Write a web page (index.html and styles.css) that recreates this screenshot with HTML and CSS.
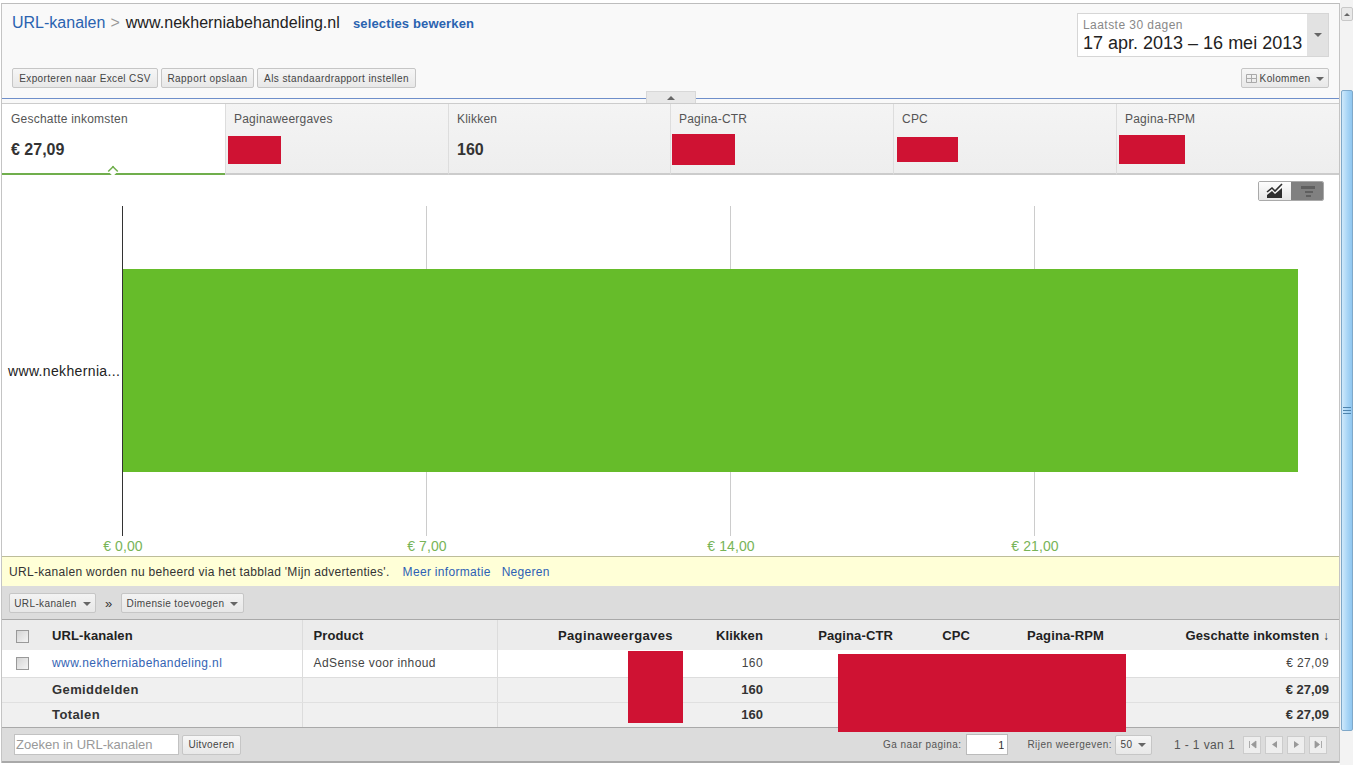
FILE: index.html
```html
<!DOCTYPE html>
<html lang="nl">
<head>
<meta charset="utf-8">
<title>URL-kanalen</title>
<link rel="stylesheet" href="styles.css">
</head>
<body>
<div class="page">
  <main class="main">
    <header class="header">
      <div class="top-row">
        <div class="crumbs">
          <a class="crumb-link">URL-kanalen</a><span class="crumb-sep">&gt;</span><span class="crumb-cur">www.nekherniabehandeling.nl</span><a class="edit-link">selecties bewerken</a>
        </div>
        <div class="date-box">
          <div class="date-text"><div class="date-label">Laatste 30 dagen</div><div class="date-range">17 apr. 2013 – 16 mei 2013</div></div>
          <div class="date-arrow"><span class="caret"></span></div>
        </div>
      </div>
      <div class="btn-row">
        <div class="btn-group">
          <button class="btn btn-export">Exporteren naar Excel CSV</button>
          <button class="btn btn-save">Rapport opslaan</button>
          <button class="btn btn-default">Als standaardrapport instellen</button>
        </div>
        <button class="btn btn-cols">
          <svg class="cols-icon" width="11" height="9" viewBox="0 0 11 9"><path d="M.5.5h10v8H.5zM.5 4.5h10M5.500.5v8" fill="none" stroke="#aaa"/></svg>Kolommen<span class="caret caret-btn"></span>
        </button>
      </div>
      <div class="collapse"><span class="caret-up"></span></div>
    </header>

    <div class="tabs-gap"></div>
    <section class="tabs">
      <div class="tab tab-on"><div class="tab-label">Geschatte inkomsten</div><div class="tab-value">€ 27,09</div><span class="notch"></span></div>
      <div class="tab"><div class="tab-label">Paginaweergaves</div></div>
      <div class="tab"><div class="tab-label">Klikken</div><div class="tab-value">160</div></div>
      <div class="tab"><div class="tab-label">Pagina-CTR</div></div>
      <div class="tab"><div class="tab-label">CPC</div></div>
      <div class="tab"><div class="tab-label">Pagina-RPM</div></div>
    </section>

    <section class="chart">
      <div class="chart-tools">
        <div class="toggle">
          <span class="toggle-line"><svg width="20" height="16" viewBox="0 0 20 16"><path d="M2 15v-3l5-4 3 3 7-6v10z" fill="#2e2e2e"/><path d="M2 9l5-4 3 3 7-7" fill="none" stroke="#2e2e2e" stroke-width="1.600"/></svg></span>
          <span class="toggle-bar"><svg width="22" height="14" viewBox="0 0 22 14"><path d="M5 2h14v3H5zM9 7h8v2H9zM10 11h5v2h-5z" fill="#5f5f5f"/></svg></span>
        </div>
      </div>
      <svg class="plot" width="1337" height="350" viewBox="0 0 1337 350">
        <path d="M424.500 0V330M728.500 0V330M1032.500 0V330" stroke="#ccc" fill="none"/>
        <rect x="121" y="63" width="1175" height="203" fill="#66bc2a"/>
        <path d="M120.500 0V330" stroke="#333" fill="none"/>
        <text class="cat" x="6" y="170">www.nekhernia...</text>
        <text class="tick" x="121" y="345">€ 0,00</text>
        <text class="tick" x="425" y="345">€ 7,00</text>
        <text class="tick" x="729" y="345">€ 14,00</text>
        <text class="tick" x="1033" y="345">€ 21,00</text>
      </svg>
    </section>

    <div class="notice">URL-kanalen worden nu beheerd via het tabblad 'Mijn advertenties'.<a class="notice-link">Meer informatie</a><a class="notice-link notice-link2">Negeren</a></div>

    <div class="dim-bar">
      <button class="btn btn-dim btn-dim1">URL-kanalen<span class="caret caret-btn"></span></button>
      <span class="raquo">»</span>
      <button class="btn btn-dim btn-dim2">Dimensie toevoegen<span class="caret caret-btn"></span></button>
    </div>

    <table class="grid">
      <colgroup>
        <col class="c-check"><col class="c-url"><col class="c-prod"><col class="c-views"><col class="c-clicks"><col class="c-ctr"><col class="c-cpc"><col class="c-rpm"><col class="c-earn">
      </colgroup>
      <thead>
        <tr>
          <th class="ck"><span class="box"></span></th><th class="l sep">URL-kanalen</th><th class="l sep prod">Product</th>
          <th class="th-wide">Paginaweergaves</th><th>Klikken</th><th>Pagina-CTR</th><th>CPC</th><th>Pagina-RPM</th><th>Geschatte inkomsten <span class="sort">↓</span></th>
        </tr>
      </thead>
      <tbody>
        <tr class="row-data">
          <td class="ck"><span class="box"></span></td><td class="l sep"><a class="site-link">www.nekherniabehandeling.nl</a></td><td class="l sep prod">AdSense voor inhoud</td>
          <td></td><td>160</td><td></td><td></td><td></td><td>€ 27,09</td>
        </tr>
        <tr class="row-sum row-avg">
          <td class="ck"></td><td class="l sep">Gemiddelden</td><td class="l sep"></td>
          <td></td><td>160</td><td></td><td></td><td></td><td>€ 27,09</td>
        </tr>
        <tr class="row-sum row-tot">
          <td class="ck"></td><td class="l sep">Totalen</td><td class="l sep"></td>
          <td></td><td>160</td><td></td><td></td><td></td><td>€ 27,09</td>
        </tr>
      </tbody>
    </table>

    <footer class="foot">
      <div class="foot-left">
        <input class="search" type="text" placeholder="Zoeken in URL-kanalen">
        <button class="btn btn-go">Uitvoeren</button>
      </div>
      <div class="foot-right">
        <span class="foot-label">Ga naar pagina:</span>
        <input class="page-input" type="text" value="1">
        <span class="foot-label foot-rows">Rijen weergeven:</span>
        <button class="btn btn-rows">50<span class="caret caret-btn"></span></button>
        <span class="range">1 - 1 van 1</span>
        <div class="pager">
          <span class="pg"><svg width="9" height="9" viewBox="0 0 9 9"><path d="M1.500 1v7M8 1v7L3.500 4.500z" fill="#999" stroke="#999" stroke-width=".8"/></svg></span>
          <span class="pg"><svg width="9" height="9" viewBox="0 0 9 9"><path d="M7 1v7L2 4.500z" fill="#999"/></svg></span>
          <span class="pg"><svg width="9" height="9" viewBox="0 0 9 9"><path d="M2 1v7l5-3.500z" fill="#999"/></svg></span>
          <span class="pg"><svg width="9" height="9" viewBox="0 0 9 9"><path d="M7.500 1v7M1 1v7l4.500-3.500z" fill="#999" stroke="#999" stroke-width=".8"/></svg></span>
        </div>
      </div>
    </footer>
  </main>

  <aside class="scrollbar">
    <div class="sb-up"><span class="caret-up caret-sb"></span></div>
    <div class="sb-thumb"><span class="sb-grip"></span></div>
  </aside>
</div>

<div class="redact r-views"></div>
<div class="redact r-ctr"></div>
<div class="redact r-cpc"></div>
<div class="redact r-rpm"></div>
<div class="redact r-col"></div>
<div class="redact r-cols"></div>
</body>
</html>
```

FILE: styles.css
```css
* { box-sizing: border-box; }
html, body { margin: 0; padding: 0; height: 765px; overflow: hidden; background: #fff; }
body { font-family: "Liberation Sans", Arial, sans-serif; color: #333; position: relative; }
a { text-decoration: none; }

.page { display: flex; width: 1353px; height: 765px; align-items: flex-start; }

.main { width: 1339px; margin: 3px 0 0 1px; border-top: 1px solid #bdbdbd; border-left: 1px solid #c4c4c4; border-right: 1px solid #c4c4c4; flex: none; }

/* header */
.header { position: relative; height: 95px; padding: 9px 10px 0 10px; background: #f9f9f9; border-bottom: 1px solid #6f8fca; }
.top-row { display: flex; justify-content: space-between; height: 43px; }
.crumbs { display: flex; align-items: baseline; font-size: 16px; padding-top: 1px; }
.crumb-link { color: #2a63b0; }
.crumb-sep { color: #999; margin: 0 6px 0 5px; }
.crumb-cur { color: #222; letter-spacing: .06px; }
.edit-link { color: #2a63b0; font-size: 13px; font-weight: bold; margin-left: 13px; letter-spacing: .15px; }
.date-box { display: flex; width: 252px; height: 44px; border: 1px solid #d6d6d6; background: #fff; }
.date-text { width: 229px; padding: 4px 0 0 5px; }
.date-label { font-size: 12px; color: #888; line-height: 14px; letter-spacing: .45px; }
.date-range { font-size: 18px; color: #222; line-height: 22px; white-space: nowrap; }
.date-arrow { flex: 1; background: #e2e2e2; display: flex; align-items: center; justify-content: center; }

.caret { display: inline-block; width: 0; height: 0; border-left: 4px solid transparent; border-right: 4px solid transparent; border-top: 4px solid #666; }
.caret-btn { margin-left: 6px; vertical-align: 1px; }
.caret-up { display: inline-block; width: 0; height: 0; border-left: 4px solid transparent; border-right: 4px solid transparent; border-bottom: 4px solid #666; }

.btn-row { display: flex; justify-content: space-between; margin-top: 12px; }
.btn-group { display: flex; gap: 3px; }
.btn { font-family: "Liberation Sans", Arial, sans-serif; font-size: 10px; letter-spacing: .37px; color: #444; height: 20px; padding: 0; border: 1px solid #c6c6c6; border-radius: 2px; background: linear-gradient(#f6f6f6, #e8e8e8); white-space: nowrap; }
.btn-export { width: 146px; }
.btn-save { width: 93px; letter-spacing: .45px; }
.btn-default { width: 159px; letter-spacing: .42px; }
.btn-cols { width: 88px; }
.cols-icon { margin-right: 3px; vertical-align: -1px; }
.collapse { position: absolute; left: 644px; top: 87px; width: 50px; height: 12px; background: #e8e8e8; border: 1px solid #d8d8d8; border-bottom: 0; display: flex; align-items: center; justify-content: center; }

/* metric tabs */
.tabs-gap { height: 4px; background: #f9f9f9; }
.tabs { display: grid; grid-template-columns: 223px 223px 222px 223px 223px 223px; height: 72px; border-top: 1px solid #ccc; }
.tab { position: relative; padding: 8px 9px 0 8px; background: linear-gradient(#f4f4f4, #eeeeee); border-left: 1px solid #ddd; border-bottom: 2px solid #ccc; }
.tab-label { font-size: 12px; line-height: 14px; color: #555; letter-spacing: .22px; }
.tab-value { font-size: 16px; font-weight: bold; line-height: 20px; margin-top: 14px; color: #333; }
.tab-on { background: #fff; border-left: 0; border-bottom: 2px solid #70ae4c; padding-left: 9px; }
.notch { position: absolute; left: 106px; bottom: -1px; width: 10px; height: 10px; background: #fff; border-top: 2px solid #70ae4c; border-left: 2px solid #70ae4c; transform: translateY(2px) rotate(45deg) scale(.75); }

/* chart */
.chart { background: #fff; }
.chart-tools { height: 31px; padding: 6px 15px 0 0; display: flex; justify-content: flex-end; }
.toggle { display: flex; width: 66px; height: 20px; border: 1px solid #a9a9a9; border-radius: 2px; overflow: hidden; }
.toggle-line { width: 32px; display: flex; align-items: center; justify-content: center; background: linear-gradient(#fdfdfd, #e6e6e6); }
.toggle-bar { flex: 1; display: flex; align-items: center; justify-content: center; background: #808080; }
.plot { display: block; }
.cat { font-family: "Liberation Sans", Arial, sans-serif; font-size: 14px; fill: #222; letter-spacing: .35px; }
.tick { font-family: "Liberation Sans", Arial, sans-serif; font-size: 14px; fill: #78b457; text-anchor: middle; letter-spacing: .1px; }

/* notice */
.notice { height: 30px; padding-left: 7px; line-height: 31px; font-size: 12px; background: #ffffd7; border-top: 1px solid #bdbd9a; color: #333; letter-spacing: .31px; }
.notice-link { color: #2d61b5; margin-left: 13px; }
.notice-link2 { margin-left: 11px; }

/* dimension bar */
.dim-bar { display: flex; align-items: flex-start; height: 34px; padding: 7px 0 0 7px; background: #dcdcdc; border-bottom: 1px solid #a9a9a9; }
.btn-dim { background: linear-gradient(#f3f3f3, #e7e7e7); }
.btn-dim1 { width: 87px; }
.btn-dim2 { width: 123px; }
.raquo { width: 25px; height: 20px; line-height: 22px; text-align: center; font-size: 13px; color: #333; }

/* table */
.grid { width: 1337px; table-layout: fixed; border-collapse: collapse; font-size: 12px; }
.c-check { width: 40px; } .c-url { width: 260px; } .c-prod { width: 195px; } .c-views { width: 186px; }
.c-clicks { width: 90px; } .c-ctr { width: 130px; } .c-cpc { width: 77px; } .c-rpm { width: 134px; } .c-earn { width: 225px; }
.grid th, .grid td { padding: 0 10px 0 0; text-align: right; white-space: nowrap; overflow: hidden; }
.grid .l { text-align: left; padding-left: 10px; }
.grid .prod { padding-left: 11px; }
.grid .ck { text-align: left; padding: 0 0 0 14px; }
.sep { border-right: 1px solid #dcdcdc; }
.grid th { height: 30px; padding-top: 1px; background: #ececec; font-size: 13px; color: #222; letter-spacing: .12px; }
.grid th.th-wide { letter-spacing: .4px; }
.sort { font-size: 12px; font-weight: bold; letter-spacing: 0; }
.box { display: inline-block; width: 13px; height: 13px; border: 1px solid #999; background: linear-gradient(135deg, #d4d4d4, #f4f4f4); vertical-align: middle; }
.row-data td { height: 27px; background: #fff; border-bottom: 1px solid #ddd; color: #444; letter-spacing: .4px; }
.site-link { color: #3464b4; }
.row-sum td { background: #f0f0f0; font-weight: bold; font-size: 13px; color: #333; border-bottom: 1px solid #e0e0e0; }
.row-sum td.l { letter-spacing: .4px; }
.row-avg td { height: 25px; }
.row-tot td { height: 25px; border-bottom: 0; }

/* footer */
.foot { display: flex; justify-content: space-between; align-items: center; height: 36px; padding: 0 12px 0 12px; background: #dcdcdc; border-top: 1px solid #a9a9a9; border-bottom: 2px solid #a9a9a9; }
.foot-left { display: flex; align-items: center; gap: 3px; }
.foot-right { display: flex; align-items: center; }
.search { width: 165px; height: 21px; padding: 0 1px; border: 1px solid #c2c2c2; background: #fff; font-family: "Liberation Sans", Arial, sans-serif; font-size: 13px; }
.search::placeholder { color: #999; opacity: 1; }
.btn-go { width: 59px; height: 20px; }
.foot-label { font-size: 10px; letter-spacing: .45px; color: #555; }
.page-input { width: 42px; height: 21px; margin-left: 5px; padding: 0 3px; border: 1px solid #bbb; background: #fff; text-align: right; font-family: "Liberation Sans", Arial, sans-serif; font-size: 11px; color: #333; }
.foot-rows { margin-left: 19px; }
.btn-rows { margin-left: 3px; width: 37px; }
.range { margin-left: 22px; font-size: 12px; color: #555; letter-spacing: .4px; }
.pager { display: flex; gap: 4px; margin-left: 8px; }
.pg { width: 18px; height: 18px; display: flex; align-items: center; justify-content: center; border: 1px solid #ccc; background: #eee; }

/* scrollbar */
.scrollbar { position: relative; flex: none; width: 13px; height: 765px; background: #f3f3f3; padding: 7px 0 0 1px; }
.sb-up { height: 14px; background: #e9e9e9; border: 1px solid #c8c8c8; border-radius: 2px; display: flex; align-items: center; justify-content: center; }
.caret-sb { border-left-width: 3px; border-right-width: 3px; border-bottom-width: 3px; }
.sb-thumb { margin-top: 69px; height: 641px; background: linear-gradient(90deg, #cfe9fb, #a8d5f6 55%, #8fc6ef); border: 1px solid #7fa8c9; border-radius: 2px; display: flex; align-items: center; justify-content: center; }
.sb-grip { width: 8px; height: 8px; background: repeating-linear-gradient(#4f84ad 0 1px, transparent 1px 3px); }

/* redaction blocks over the figures */
.redact { position: absolute; background: #cf1233; }
.r-views { left: 228px; top: 136px; width: 53px; height: 28px; }
.r-ctr { left: 672px; top: 134px; width: 63px; height: 31px; }
.r-cpc { left: 897px; top: 137px; width: 61px; height: 25px; }
.r-rpm { left: 1119px; top: 135px; width: 66px; height: 29px; }
.r-col { left: 628px; top: 651px; width: 55px; height: 72px; }
.r-cols { left: 838px; top: 654px; width: 288px; height: 78px; }
```
